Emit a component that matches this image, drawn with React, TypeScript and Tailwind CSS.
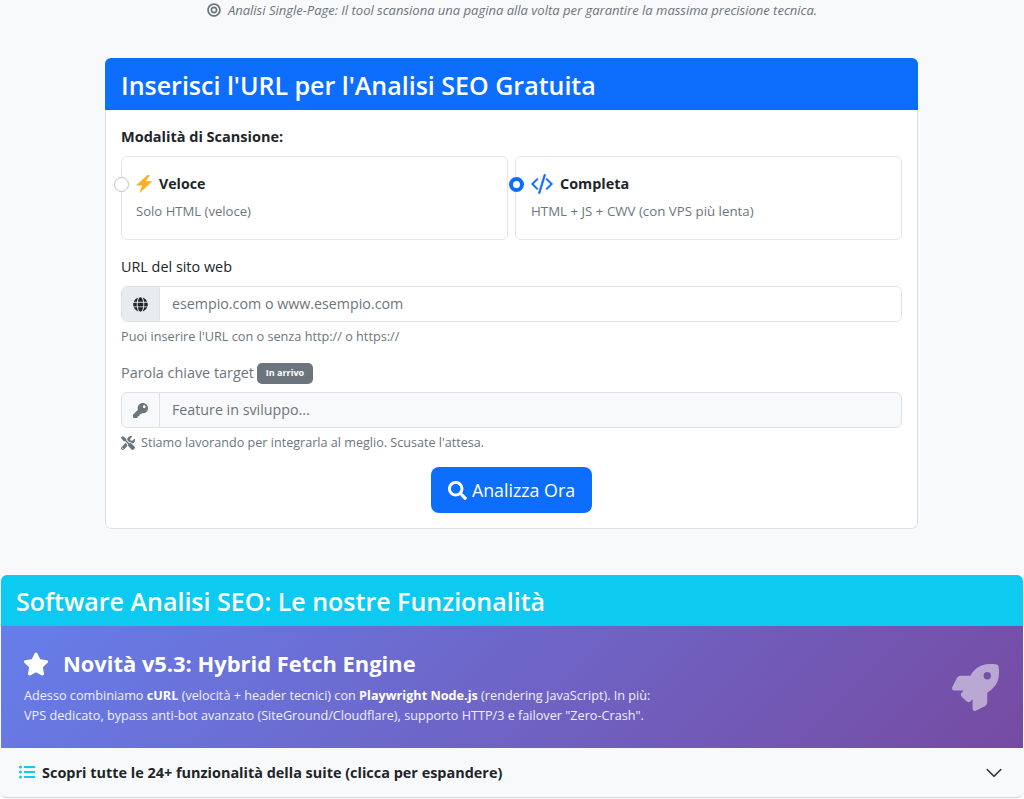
import { FaBullseye, FaGlobe, FaKey, FaListUl, FaRocket, FaSearch, FaStar, FaTools } from 'react-icons/fa';
import { BsChevronDown, BsCodeSlash } from 'react-icons/bs';

const Bolt = () => (
  <svg width="18" height="18" viewBox="0 0 18 18">
    <path d="M12.5 0.3 L1.5 10.2 H7.6 L4.6 17.7 L16.8 6.6 H10.4 L14.6 0.3 Z" fill="#fbb022" stroke="#f59e0b" strokeWidth="0.4" />
  </svg>
);

export default function App() {
  return (
    <div className="h-[799px] overflow-hidden bg-[#f8f9fa] text-[#212529] font-['Open_Sans','Noto_Sans',sans-serif]">
      {/* nota single page */}
      <p className="h-[58px] flex justify-center gap-[7px] text-[13px] leading-[20px] italic text-[#6c757d]">
        <span className="pt-[3px]"><FaBullseye size={14} /></span>
        Analisi Single-Page: Il tool scansiona una pagina alla volta per garantire la massima precisione tecnica.
      </p>

      {/* form analisi */}
      <div className="ml-[105px] w-[813px] h-[471px] bg-white rounded-[6px] overflow-hidden flex flex-col">
        <div className="h-[52px] shrink-0 bg-[#0d6efd] px-[16px] pt-[2px] flex items-center">
          <h2 className="text-[25px] font-semibold leading-none text-white">Inserisci l'URL per l'Analisi SEO Gratuita</h2>
        </div>
        <div className="flex-1 px-[15px] pt-[16px] border-x border-b border-[#dcdee0] rounded-b-[6px]">
          <label className="block text-[14.5px] font-bold leading-[22px]">Modalità di Scansione:</label>
          <div className="mt-[8px] grid grid-cols-2 gap-[7px]">
            <div className="h-[84px] bg-white border border-[#e3e5e7] rounded-[6px] pt-[16px]">
              <div className="flex items-center h-[22px]">
                <span className="-ml-[8px] w-[15px] h-[15px] rounded-full border border-[#bfc3c7] bg-white shrink-0" />
                <span className="ml-[6px]"><Bolt /></span>
                <span className="ml-[6px] text-[14.2px] font-bold">Veloce</span>
              </div>
              <p className="mt-[6px] ml-[14px] text-[13.1px] leading-[20px] text-[#6c757d]">Solo HTML (veloce)</p>
            </div>
            <div className="h-[84px] bg-white border border-[#e3e5e7] rounded-[6px] pt-[16px]">
              <div className="flex items-center h-[22px]">
                <span className="-ml-[7px] w-[15px] h-[15px] rounded-full border-[4px] border-[#0d6efd] bg-white shrink-0" />
                <span className="ml-[7px] text-[#0d6efd]"><BsCodeSlash size={22} className="stroke-[0.6]" /></span>
                <span className="ml-[7px] text-[14.4px] font-bold">Completa</span>
              </div>
              <p className="mt-[6px] ml-[15px] text-[13.3px] leading-[20px] text-[#6c757d]">HTML + JS + CWV (con VPS più lenta)</p>
            </div>
          </div>

          <label className="block mt-[15px] text-[14.4px] leading-[24px]">URL del sito web</label>
          <div className="mt-[7px] h-[36px] flex border border-[#dee2e6] rounded-[6px] overflow-hidden">
            <span className="w-[38px] bg-[#e9ecef] border-r border-[#dee2e6] flex items-center justify-center"><FaGlobe size={15} /></span>
            <input className="flex-1 px-[12px] text-[14.25px] bg-white outline-none placeholder:text-[#6c757d]" placeholder="esempio.com o www.esempio.com" />
          </div>
          <p className="mt-[4px] text-[12.7px] leading-[20px] text-[#6c757d]">Puoi inserire l'URL con o senza http:// o https://</p>

          <div className="mt-[15px] flex items-center h-[24px]">
            <label className="text-[14.4px] text-[#6c757d]">Parola chiave target</label>
            <span className="ml-[3px] h-[21px] w-[56px] justify-center rounded-[5px] bg-[#6c757d] text-white text-[9px] font-bold flex items-center">In arrivo</span>
          </div>
          <div className="mt-[7px] h-[36px] flex border border-[#dee2e6] rounded-[6px] overflow-hidden bg-[#f8f9fa]">
            <span className="w-[38px] border-r border-[#dee2e6] flex items-center justify-center text-[#6c757d]"><FaKey size={15} /></span>
            <input disabled className="flex-1 px-[12px] text-[14.25px] bg-transparent outline-none placeholder:text-[#6c757d]" placeholder="Feature in sviluppo..." />
          </div>
          <p className="mt-[5px] flex items-center gap-[6px] text-[12.6px] leading-[20px] text-[#6c757d]">
            <FaTools size={14} /> Stiamo lavorando per integrarla al meglio. Scusate l'attesa.
          </p>

          <div className="mt-[14px] flex justify-center">
            <button className="h-[46px] w-[161px] rounded-[8px] bg-[#0d6efd] text-white text-[17.8px] pt-[1px] flex items-center justify-center gap-[5px]">
              <FaSearch size={19} /> Analizza Ora
            </button>
          </div>
        </div>
      </div>

      {/* funzionalita */}
      <div className="mt-[46px] mx-[1px] h-[223px] bg-[#f8f9fa] rounded-[6px] border-b border-[#d5d7d9] overflow-hidden">
        <div className="h-[51px] bg-[#0dcaf0] px-[15px] pt-[2px] flex items-center">
          <h2 className="text-[25px] font-semibold leading-none text-white">Software Analisi SEO: Le nostre Funzionalità</h2>
        </div>
        <div className="h-[122px] bg-[linear-gradient(135deg,#667eea,#764ba2)] pl-[22px] pr-[24px] flex items-center justify-between text-white">
          <div>
            <div className="flex items-center gap-[14px] -mt-[1px]">
              <FaStar size={26} />
              <h3 className="text-[21.9px] font-bold leading-[32px]">Novità v5.3: Hybrid Fetch Engine</h3>
            </div>
            <p className="mt-[5px] ml-[1px] text-[12.67px] leading-[20px] text-white/90">
              Adesso combiniamo <b className="text-white">cURL</b> (velocità + header tecnici) con <b className="text-white">Playwright Node.js</b> (rendering JavaScript). In più:<br />
              VPS dedicato, bypass anti-bot avanzato (SiteGround/Cloudflare), supporto HTTP/3 e failover "Zero-Crash".
            </p>
          </div>
          <FaRocket size={47} className="opacity-50" />
        </div>
        <div className="h-[49px] pl-[18px] pr-[20px] flex items-center justify-between">
          <div className="flex items-center gap-[7px]">
            <FaListUl size={16} className="text-[#0dcaf0]" />
            <span className="text-[14.45px] font-bold">Scopri tutte le 24+ funzionalità della suite (clicca per espandere)</span>
          </div>
          <BsChevronDown size={18} className="stroke-[0.4]" />
        </div>
      </div>
    </div>
  );
}
